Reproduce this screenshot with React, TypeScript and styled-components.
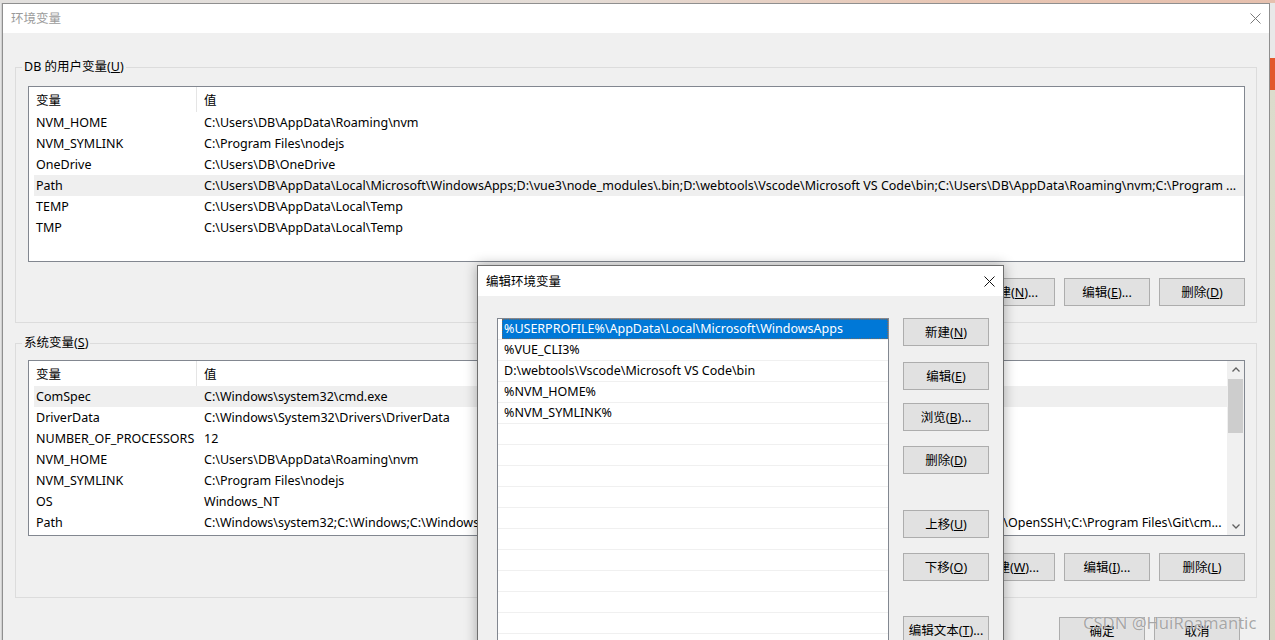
import React from "react";
import styled, { createGlobalStyle } from "styled-components";

const GlobalStyle = createGlobalStyle`
  *, *::before, *::after { box-sizing: border-box; }
  html, body { margin: 0; padding: 0; }
  body {
    font-family: "Noto Sans", "Noto Sans CJK SC", sans-serif;
    font-size: 12.5px;
    color: #000;
    overflow: hidden;
  }
`;

const Desktop = styled.div`
  position: relative;
  width: 1275px;
  height: 640px;
  overflow: hidden;
  display: flex;
  flex-direction: column;
  background: #e6e3df;
`;

const TopStrip = styled.div`
  height: 3px;
  flex: none;
  background: linear-gradient(to right, #e2e0de 0%, #e4dcd6 45%, #e8c6b4 75%, #e6c0ae 100%);
`;

const Stage = styled.div`
  display: flex;
  flex: 1;
  min-height: 0;
`;

const LeftEdge = styled.div`
  width: 2px;
  flex: none;
  background: #e4e4e4;
  border-right: 1px solid #d0d0d0;
`;

const RightStrip = styled.div`
  flex: 1;
  background: linear-gradient(
    to bottom,
    #e9e9e9 0px,
    #e9e9e9 55px,
    #e2582c 55px,
    #e2582c 87px,
    #dcdccc 87px,
    #d6d5c2 100%
  );
`;

const Window = styled.div`
  width: 1268px;
  flex: none;
  border: 1px solid #8f8f8f;
  border-bottom: none;
  background: #f0f0f0;
  display: flex;
  flex-direction: column;
`;

const TitleBar = styled.div<{ $h: number }>`
  height: ${(p) => p.$h}px;
  flex: none;
  background: #fff;
  display: flex;
  align-items: center;
  padding: 0 0 2px 8px;
`;

const TitleText = styled.span<{ $inactive?: boolean }>`
  flex: 1;
  color: ${(p) => (p.$inactive ? "#9b9b9b" : "#000")};
`;

const CloseBox = styled.div`
  width: 28px;
  height: 100%;
  display: flex;
  align-items: center;
  justify-content: center;
  padding-top: 2px;
`;

const WindowBody = styled.div`
  padding: 0 12px;
  display: flex;
  flex-direction: column;
`;

const Group = styled.fieldset<{ $top: number; $padTop: number }>`
  margin: ${(p) => p.$top}px 0 0;
  padding: ${(p) => p.$padTop}px 11px 16px 12px;
  border: 1px solid #dcdcdc;
  min-width: 0;
`;

const Legend = styled.legend`
  padding: 0 2px;
  margin-left: -6px;
  line-height: 18px;
`;

const Key = styled.span`
  text-decoration: underline;
`;

const ListBox = styled.div<{ $h: number }>`
  height: ${(p) => p.$h}px;
  border: 1px solid #828790;
  background: #fff;
  display: flex;
  overflow: hidden;
`;

const ListMain = styled.div`
  flex: 1;
  min-width: 0;
`;

const HeaderRow = styled.div`
  display: grid;
  grid-template-columns: 168px 1fr;
  height: 25px;
`;

const HeaderCell = styled.div<{ $divider?: boolean }>`
  padding: 0 0 1px 7px;
  display: flex;
  align-items: center;
  border-right: ${(p) => (p.$divider ? "1px solid #e5e5e5" : "none")};
`;

const DataRow = styled.div<{ $selected?: boolean }>`
  display: grid;
  grid-template-columns: 163px 1fr;
  margin-left: 5px;
  height: 21px;
  line-height: 21px;
  background: ${(p) => (p.$selected ? "#efefef" : "transparent")};
`;

const Cell = styled.div<{ $pad: number }>`
  padding-left: ${(p) => p.$pad}px;
  white-space: nowrap;
  overflow: hidden;
`;

const ScrollTrack = styled.div`
  width: 17px;
  flex: none;
  background: #f0f0f0;
  display: flex;
  flex-direction: column;
  padding: 0 1px;
`;

const ScrollArrow = styled.div`
  height: 17px;
  display: flex;
  align-items: center;
  justify-content: center;
`;

const ScrollThumb = styled.div`
  height: 54px;
  margin-top: 1px;
  background: #cdcdcd;
`;

const ScrollSpacer = styled.div`
  flex: 1;
`;

const ButtonRow = styled.div<{ $top: number; $right?: number }>`
  display: flex;
  justify-content: flex-end;
  gap: 9px;
  margin-top: ${(p) => p.$top}px;
  padding-right: ${(p) => p.$right ?? 0}px;
`;

const Button = styled.button<{ $top?: number }>`
  width: 86px;
  height: 28px;
  flex: none;
  margin: ${(p) => p.$top ?? 0}px 0 0;
  padding: 0 0 2px;
  background: #e1e1e1;
  border: 1px solid #adadad;
  font: inherit;
  color: #000;
`;

const Dialog = styled.div`
  position: absolute;
  left: 477px;
  top: 265px;
  width: 527px;
  height: 420px;
  border: 1px solid #6f6f6f;
  background: #f0f0f0;
  box-shadow: 0 0 12px rgba(0, 0, 0, 0.32);
  display: flex;
  flex-direction: column;
`;

const DialogBody = styled.div`
  display: flex;
  gap: 14px;
  padding: 22px 0 0 19px;
`;

const EditList = styled.div`
  width: 392px;
  height: 400px;
  border: 1px solid #828790;
  background: #fff;
  flex: none;
`;

const EditRow = styled.div`
  height: 21px;
  border-bottom: 1px solid #f0f0f0;
  padding-left: 4px;
  display: flex;
`;

const EditCell = styled.div<{ $selected?: boolean }>`
  flex: 1;
  padding-left: 2px;
  line-height: 20px;
  white-space: nowrap;
  background: ${(p) => (p.$selected ? "#0078d7" : "transparent")};
  color: ${(p) => (p.$selected ? "#fff" : "#000")};
  outline: ${(p) => (p.$selected ? "1px dotted #6a6a6a" : "none")};
  outline-offset: -1px;
`;

const DialogButtons = styled.div`
  display: flex;
  flex-direction: column;
  width: 86px;
`;

const Watermark = styled.div`
  position: absolute;
  left: 1083px;
  top: 611px;
  font-size: 16.6px;
  color: rgba(135, 135, 135, 0.72);
  text-shadow: 0 0 1px rgba(255, 255, 255, 0.9);
  white-space: nowrap;
`;

function CloseIcon({ color }: { color: string }) {
  return (
    <svg width="11" height="11" viewBox="0 0 11 11">
      <path d="M0.5 0.5 L10.5 10.5 M10.5 0.5 L0.5 10.5" stroke={color} strokeWidth="1" fill="none" />
    </svg>
  );
}

function Chevron({ up }: { up?: boolean }) {
  return (
    <svg width="8" height="5" viewBox="0 0 8 5">
      <path d={up ? "M0.5 4.5 L4 1 L7.5 4.5" : "M0.5 0.5 L4 4 L7.5 0.5"} stroke="#606060" strokeWidth="1.3" fill="none" />
    </svg>
  );
}

type Pair = [string, string];

const userVars: Pair[] = [
  ["NVM_HOME", "C:\\Users\\DB\\AppData\\Roaming\\nvm"],
  ["NVM_SYMLINK", "C:\\Program Files\\nodejs"],
  ["OneDrive", "C:\\Users\\DB\\OneDrive"],
  [
    "Path",
    "C:\\Users\\DB\\AppData\\Local\\Microsoft\\WindowsApps;D:\\vue3\\node_modules\\.bin;D:\\webtools\\Vscode\\Microsoft VS Code\\bin;C:\\Users\\DB\\AppData\\Roaming\\nvm;C:\\Program ...",
  ],
  ["TEMP", "C:\\Users\\DB\\AppData\\Local\\Temp"],
  ["TMP", "C:\\Users\\DB\\AppData\\Local\\Temp"],
];

const sysVars: Pair[] = [
  ["ComSpec", "C:\\Windows\\system32\\cmd.exe"],
  ["DriverData", "C:\\Windows\\System32\\Drivers\\DriverData"],
  ["NUMBER_OF_PROCESSORS", "12"],
  ["NVM_HOME", "C:\\Users\\DB\\AppData\\Roaming\\nvm"],
  ["NVM_SYMLINK", "C:\\Program Files\\nodejs"],
  ["OS", "Windows_NT"],
  [
    "Path",
    "C:\\Windows\\system32;C:\\Windows;C:\\Windows\\system32\\wbem;C:\\Windows\\system32\\WindowsPowerShell\\v1.0\\;C:\\Windows\\system32\\OpenSSH\\;C:\\Program Files\\Git\\cm...",
  ],
];

const pathEntries = [
  "%USERPROFILE%\\AppData\\Local\\Microsoft\\WindowsApps",
  "%VUE_CLI3%",
  "D:\\webtools\\Vscode\\Microsoft VS Code\\bin",
  "%NVM_HOME%",
  "%NVM_SYMLINK%",
];

function VarList({ rows, selected, scroll }: { rows: Pair[]; selected: number; scroll?: boolean }) {
  return (
    <ListBox $h={176}>
      <ListMain>
        <HeaderRow>
          <HeaderCell $divider>变量</HeaderCell>
          <HeaderCell>值</HeaderCell>
        </HeaderRow>
        {rows.map(([name, value], i) => (
          <DataRow key={name + i} $selected={i === selected}>
            <Cell $pad={2}>{name}</Cell>
            <Cell $pad={7}>{value}</Cell>
          </DataRow>
        ))}
      </ListMain>
      {scroll && (
        <ScrollTrack>
          <ScrollArrow>
            <Chevron up />
          </ScrollArrow>
          <ScrollThumb />
          <ScrollSpacer />
          <ScrollArrow>
            <Chevron />
          </ScrollArrow>
        </ScrollTrack>
      )}
    </ListBox>
  );
}

export default function App() {
  const emptyRows = Array.from({ length: 14 });
  return (
    <Desktop>
      <GlobalStyle />
      <TopStrip />
      <Stage>
        <LeftEdge />
        <Window>
          <TitleBar $h={29}>
            <TitleText $inactive>环境变量</TitleText>
            <CloseBox>
              <CloseIcon color="#7a7a7a" />
            </CloseBox>
          </TitleBar>
          <WindowBody>
            <Group $top={25} $padTop={10}>
              <Legend>
                DB 的用户变量(<Key>U</Key>)
              </Legend>
              <VarList rows={userVars} selected={3} />
              <ButtonRow $top={16}>
                <Button>
                  新建(<Key>N</Key>)...
                </Button>
                <Button>
                  编辑(<Key>E</Key>)...
                </Button>
                <Button>
                  删除(<Key>D</Key>)
                </Button>
              </ButtonRow>
            </Group>
            <Group $top={11} $padTop={8}>
              <Legend>
                系统变量(<Key>S</Key>)
              </Legend>
              <VarList rows={sysVars} selected={0} scroll />
              <ButtonRow $top={17}>
                <Button>
                  新建(<Key>W</Key>)...
                </Button>
                <Button>
                  编辑(<Key>I</Key>)...
                </Button>
                <Button>
                  删除(<Key>L</Key>)
                </Button>
              </ButtonRow>
            </Group>
            <ButtonRow $top={19} $right={17}>
              <Button>确定</Button>
              <Button>取消</Button>
            </ButtonRow>
          </WindowBody>
        </Window>
        <RightStrip />
      </Stage>

      <Dialog>
        <TitleBar $h={30}>
          <TitleText>编辑环境变量</TitleText>
          <CloseBox>
            <CloseIcon color="#111" />
          </CloseBox>
        </TitleBar>
        <DialogBody>
          <EditList>
            {pathEntries.map((entry, i) => (
              <EditRow key={entry}>
                <EditCell $selected={i === 0}>{entry}</EditCell>
              </EditRow>
            ))}
            {emptyRows.map((_, i) => (
              <EditRow key={"empty" + i}>
                <EditCell />
              </EditRow>
            ))}
          </EditList>
          <DialogButtons>
            <Button>
              新建(<Key>N</Key>)
            </Button>
            <Button $top={16}>
              编辑(<Key>E</Key>)
            </Button>
            <Button $top={13}>
              浏览(<Key>B</Key>)...
            </Button>
            <Button $top={15}>
              删除(<Key>D</Key>)
            </Button>
            <Button $top={36}>
              上移(<Key>U</Key>)
            </Button>
            <Button $top={15}>
              下移(<Key>O</Key>)
            </Button>
            <Button $top={35}>
              编辑文本(<Key>T</Key>)...
            </Button>
          </DialogButtons>
        </DialogBody>
      </Dialog>

      <Watermark>CSDN @HuiRoamantic</Watermark>
    </Desktop>
  );
}
